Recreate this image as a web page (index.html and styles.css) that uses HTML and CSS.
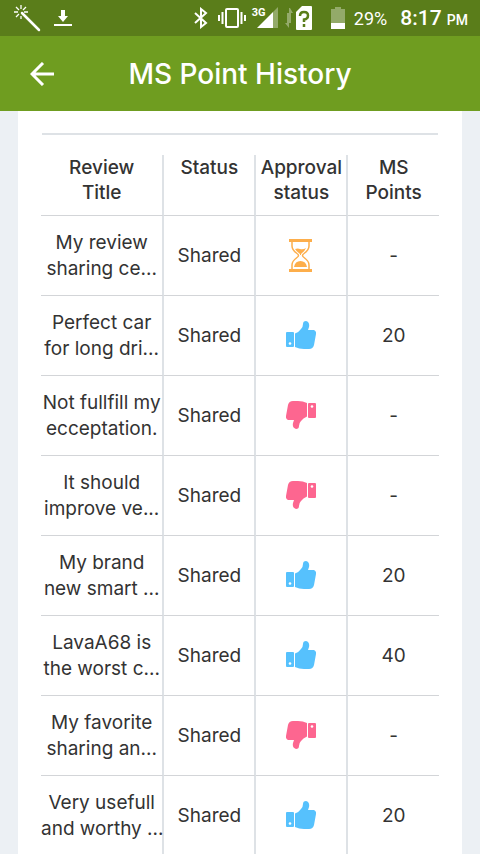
FILE: index.html
```html
<!DOCTYPE html>
<html lang="en">
<head>
    <meta charset="UTF-8">
    <meta name="viewport" content="width=device-width, initial-scale=1.0">
    <title>MS Point History</title>
    <link rel="stylesheet" href="styles.css">
</head>
<body>
    <!-- Shared icons -->
    <svg class="sprite" aria-hidden="true">
        <symbol id="thumb" viewBox="0 0 30 28">
            <path d="M1 11h6q1 0 1 1v13q0 1-1 1H1q-1 0-1-1V12q0-1 1-1z"/>
            <path d="M9 12.500q4-1.500 6-4.500 2-2 2-5 0-3 3-3 4 1 3 6l-1 3h6q2.500 1 2 4l-2 11q-1 4-5 4H18q-5 0-9-2z"/>
            <circle cx="4" cy="22.500" r="1.300" fill="#fff"/>
        </symbol>
        <symbol id="hourglass" viewBox="0 0 24 34">
            <path d="M0 0h23v3H0zM0 30h23v3H0z"/>
            <path d="M3 3v4q0 4 5 7.500 3 2 0 4-5 3.500-5 7.500v4M20 3v4q0 4-5 7.500-3 2 0 4 5 3.500 5 7.500v4" fill="none" stroke="currentColor" stroke-width="1.500"/>
            <path d="M6 10q3-1 5 0 3 1 6-1-1 3-5 6v1h-1v-1q-4-3-5-5zM5 28q1-6 6.500-6t6.500 6z"/>
        </symbol>
    </svg>

    <div class="app">
        <!-- Status bar -->
        <div class="status-bar">
            <div class="notifications">
                <svg width="28" height="28" viewBox="0 0 28 28" fill="none" stroke="#fff">
                    <path d="M8 9l17 17" stroke-width="2.500" stroke-linecap="round"/>
                    <path d="M7 1v4M7 12v3M0 8h4M10 8h4M2 3l3 3M12 3l-3 3M2 13l3-3" stroke-width="1.300"/>
                </svg>
                <svg width="18" height="16" viewBox="0 0 18 16" fill="#fff">
                    <path d="M7 0h4v6h3l-5 6-5-6h3zM0 14h18v2H0z"/>
                </svg>
            </div>
            <div class="system">
                <svg class="bluetooth" width="14" height="22" viewBox="0 0 14 22" fill="none" stroke="#fff" stroke-width="2">
                    <path d="M1 6l11 10-5 4V2l5 4L1 16"/>
                </svg>
                <svg class="vibrate" width="28" height="22" viewBox="0 0 28 22" fill="none" stroke="#fff" stroke-width="2">
                    <rect x="8" y="2" width="12" height="18" rx="1"/>
                    <path d="M1 8v6M4.500 5v12M27 8v6M23.500 5v12"/>
                </svg>
                <div class="signal">
                    <span class="network">3G</span>
                    <svg width="22" height="22" viewBox="0 0 22 22" fill="#fff">
                        <path d="M21 0v21h-5V5z" opacity=".35"/>
                        <path d="M16 5v16H0z"/>
                    </svg>
                </div>
                <svg class="data" width="8" height="20" viewBox="0 0 8 20" fill="#fff" opacity=".35">
                    <path d="M5 0l3 5H6v10H4V0zM2 5h2v15L0 15h2z"/>
                </svg>
                <svg class="sim" width="16" height="24" viewBox="0 0 16 24">
                    <path d="M6 0h9q1 0 1 1v22q0 1-1 1H1q-1 0-1-1V6z" fill="#fff"/>
                    <path d="M4 10q0-4 4-4t4 3.500-4 4V16M8 18v3" fill="none" stroke="#5a7d1a" stroke-width="2.500"/>
                </svg>
                <svg class="battery" width="14" height="22" viewBox="0 0 14 22" fill="#fff">
                    <path d="M4 0h6v2h4v14H0V2h4z" opacity=".35"/>
                    <path d="M0 16h14v6H0z"/>
                </svg>
                <span class="percent">29%</span>
                <span class="clock">8:17 <small>PM</small></span>
            </div>
        </div>

        <!-- Header -->
        <header class="header">
            <button class="back" type="button" aria-label="Back">
                <svg width="24" height="24" viewBox="0 0 24 24" fill="none" stroke="#fff" stroke-width="3">
                    <path d="M24 12H3M13 1L2 12l11 11"/>
                </svg>
            </button>
            <h1>MS Point History</h1>
        </header>

        <!-- Points table -->
        <main class="card">
            <hr>
            <table class="points">
                <thead>
                    <tr><th class="review">Review<br>Title</th><th class="status">Status</th><th class="status">Approval<br>status</th><th>MS<br>Points</th></tr>
                </thead>
                <tbody>
                    <tr>
                        <td>My review<br>sharing ce...</td><td>Shared</td>
                        <td><svg class="icon pending" role="img" aria-label="Pending"><use href="#hourglass"/></svg></td><td>-</td>
                    </tr>
                    <tr>
                        <td>Perfect car<br>for long dri...</td><td>Shared</td>
                        <td><svg class="icon up" role="img" aria-label="Approved"><use href="#thumb"/></svg></td><td>20</td>
                    </tr>
                    <tr>
                        <td>Not fullfill my<br>ecceptation.</td><td>Shared</td>
                        <td><svg class="icon down" role="img" aria-label="Rejected"><use href="#thumb"/></svg></td><td>-</td>
                    </tr>
                    <tr>
                        <td>It should<br>improve ve...</td><td>Shared</td>
                        <td><svg class="icon down" role="img" aria-label="Rejected"><use href="#thumb"/></svg></td><td>-</td>
                    </tr>
                    <tr>
                        <td>My brand<br>new smart ...</td><td>Shared</td>
                        <td><svg class="icon up" role="img" aria-label="Approved"><use href="#thumb"/></svg></td><td>20</td>
                    </tr>
                    <tr>
                        <td>LavaA68 is<br>the worst c...</td><td>Shared</td>
                        <td><svg class="icon up" role="img" aria-label="Approved"><use href="#thumb"/></svg></td><td>40</td>
                    </tr>
                    <tr>
                        <td>My favorite<br>sharing an...</td><td>Shared</td>
                        <td><svg class="icon down" role="img" aria-label="Rejected"><use href="#thumb"/></svg></td><td>-</td>
                    </tr>
                    <tr>
                        <td>Very usefull<br>and worthy ...</td><td>Shared</td>
                        <td><svg class="icon up" role="img" aria-label="Approved"><use href="#thumb"/></svg></td><td>20</td>
                    </tr>
                </tbody>
            </table>
        </main>
    </div>
</body>
</html>
```
FILE: styles.css
```css
/* ======= General Styling ======= */
* {
    box-sizing: border-box;
}

body {
    margin: 0;
    background: #ecf0f4;
    color: #333;
    font-family: Inter, "Liberation Sans", sans-serif;
}

.sprite {
    display: none;
}

.app {
    display: flex;
    flex-direction: column;
    height: 100vh;
    overflow: hidden;
}

/* ======= Status Bar ======= */
.status-bar {
    display: flex;
    flex: none;
    justify-content: space-between;
    height: 36px;
    padding: 0 12px 0 14px;
    background: #5a7d1a;
    color: #fff;
    font-family: Roboto, sans-serif;
}

.notifications,
.system {
    display: flex;
    align-items: center;
}

.notifications {
    gap: 12px;
}

.system svg {
    flex: none;
}

.bluetooth {
    margin-right: 10px;
}

.signal {
    position: relative;
    display: flex;
    padding-left: 5px;
    margin: 0 6px;
}

.network {
    position: absolute;
    left: 0;
    top: 0;
    font-size: 11px;
    line-height: 11px;
    font-weight: bold;
}

.data {
    margin-right: 3px;
}

.battery {
    margin: 0 9px 0 19px;
}

.percent {
    font-size: 18px;
    margin-right: 13px;
}

.clock {
    font-size: 21px;
    font-weight: 500;
    white-space: nowrap;
}

.clock small {
    font-size: 14px;
}

/* ======= Header ======= */
.header {
    display: grid;
    grid-template-columns: 84px 1fr 84px;
    flex: none;
    align-items: center;
    height: 75px;
    background: #6f9d20;
    color: #fff;
}

.back {
    display: flex;
    padding: 0 0 0 30px;
    border: 0;
    background: none;
    cursor: pointer;
}

.header h1 {
    margin: 0;
    font-size: 28px;
    font-weight: 500;
    text-align: center;
    white-space: nowrap;
}

/* ======= Card ======= */
.card {
    flex: 1;
    min-height: 0;
    margin: 0 18px;
    padding: 22px 23px 0;
    background: #fff;
}

.card hr {
    height: 2px;
    margin: 0 1px 20px;
    border: 0;
    background: #dee2e6;
}

/* ======= Points Table ======= */
.points {
    width: 100%;
    table-layout: fixed;
    border-collapse: separate;
    border-spacing: 0;
    font-size: 19px;
    line-height: 26px;
    text-align: center;
}

.points th,
.points td {
    padding: 0;
    border-right: 2px solid #dee2e6;
    border-bottom: 1px solid #d3d5d8;
    white-space: nowrap;
}

.points th:last-child,
.points td:last-child {
    border-right: 0;
}

.points th {
    height: 61px;
    font-weight: 500;
    line-height: 25px;
    vertical-align: top;
}

.points td {
    height: 80px;
}

.points .review {
    width: 31%;
}

.points .status {
    width: 92px;
}

.icon {
    display: block;
    width: 30px;
    height: 28px;
    margin: 0 auto 2px;
}

.up {
    fill: #56c1fd;
}

.down {
    fill: #fd6690;
    transform: rotate(180deg);
}

.pending {
    width: 24px;
    height: 34px;
    margin: 0 auto;
    fill: #fdae4b;
    color: #fdae4b;
}
```
